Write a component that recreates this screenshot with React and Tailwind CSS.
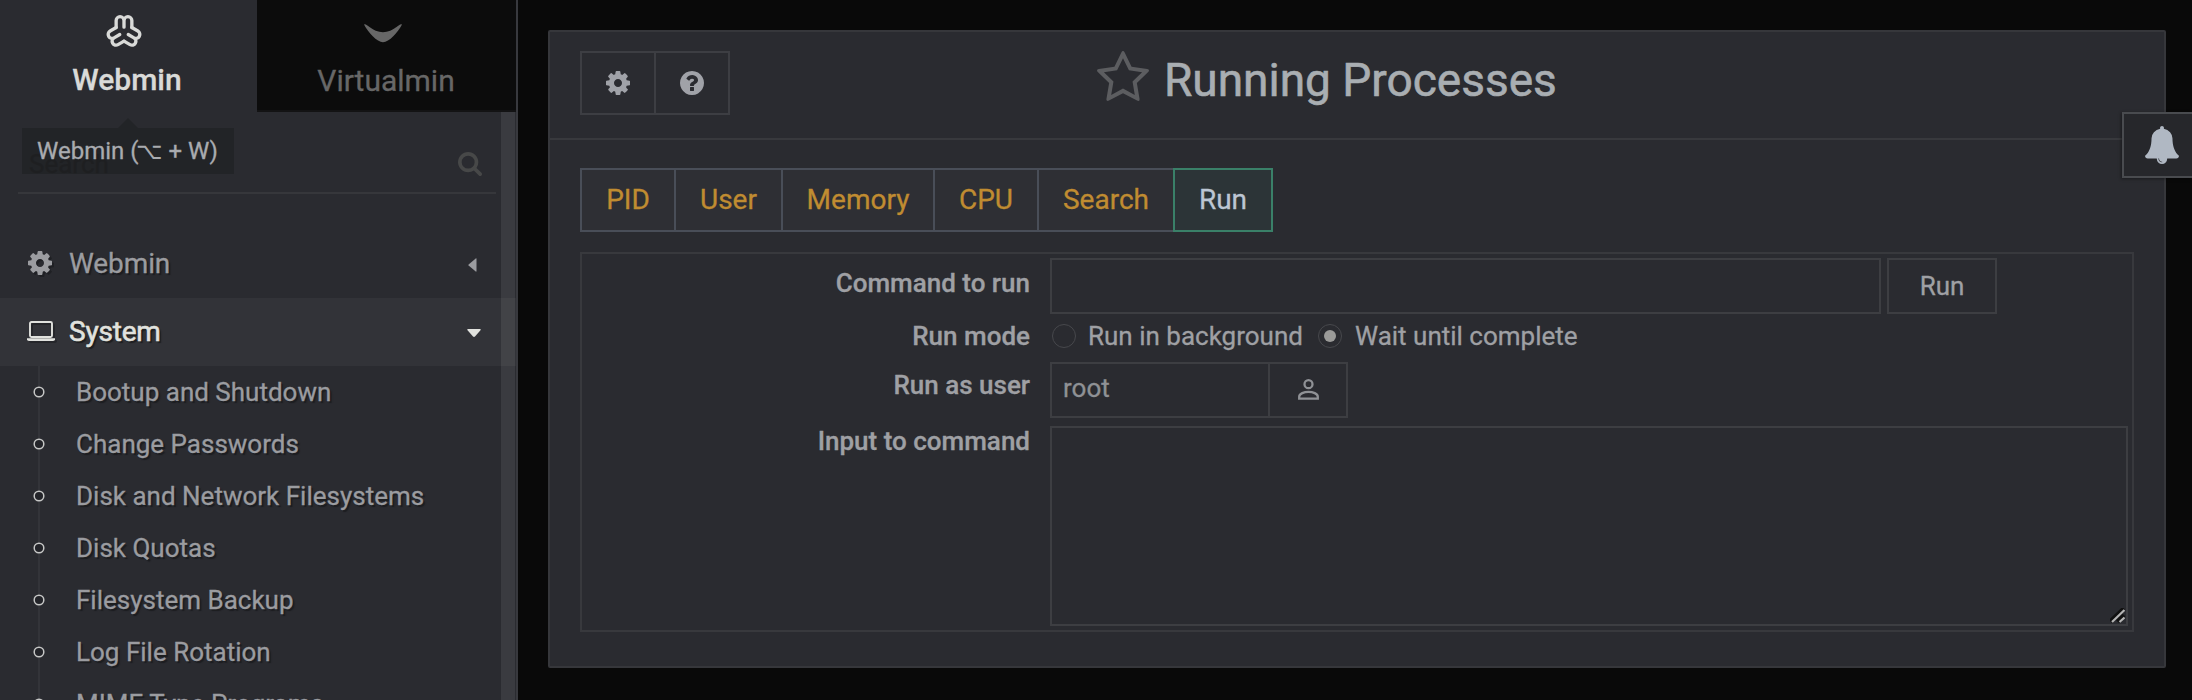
const COG =
  "M1024 896q0-106-75-181t-181-75-181 75-75 181 75 181 181 75 181-75 75-181zm512-109v222q0 12-8 23t-20 13l-185 28q-19 54-39 91 35 50 107 138 10 12 10 25t-9 23q-27 37-99 108t-94 71q-12 0-26-9l-138-108q-44 23-91 38-16 136-29 186-7 28-36 28h-222q-14 0-24.500-8.500t-11.500-21.500l-28-184q-49-16-90-37l-141 107q-10 9-25 9-14 0-25-11-126-114-165-168-7-10-7-23 0-12 8-23 15-21 51-66.500t54-70.500q-27-50-41-99l-183-27q-13-2-21-12.500t-8-23.500v-222q0-12 8-23t19-13l186-28q14-46 39-92-40-57-107-138-10-12-10-24 0-10 9-23 26-36 98.500-107.500t94.500-71.500q13 0 26 10l138 107q44-23 91-38 16-136 29-186 7-28 36-28h222q14 0 24.500 8.500t11.500 21.500l28 184q49 16 90 37l142-107q9-9 24-9 13 0 25 10 129 119 165 170 7 8 7 22 0 12-8 23-15 21-51 66.500t-54 70.500q26 50 41 98l183 28q13 2 21 12.500t8 23.500z";
const QUESTION =
  "M1024 1376v-192q0-14-9-23t-23-9h-192q-14 0-23 9t-9 23v192q0 14 9 23t23 9h192q14 0 23-9t9-23zm256-672q0-88-55.500-163t-138.500-116-170-41q-243 0-371 213-15 24 8 42l132 100q7 6 19 6 16 0 25-12 53-68 86-92 34-24 86-24 48 0 85.500 26t37.500 59q0 38-20 61t-68 45q-63 28-115.500 86.500t-52.500 125.500v36q0 14 9 23t23 9h192q14 0 23-9t9-23q0-19 21.500-49.500t54.500-49.500q32-18 49-28.500t46-35 44.500-48 28-60.500 12.500-81zm384 192q0 209-103 385.500t-279.500 279.500-385.500 103-385.500-103-279.500-279.500-103-385.500 103-385.500 279.500-279.500 385.500-103 385.500 103 279.500 279.500 103 385.500z";
const STAR =
  "M1201 1004l306-297-422-62-189-382-189 382-422 62 306 297-73 421 378-199 377 199zm527-357q0 22-26 48l-363 354 86 500q1 7 1 20 0 50-41 50-19 0-40-12l-449-236-449 236q-22 12-40 12-21 0-31.500-14.500t-10.500-35.500q0-6 2-20l86-500-364-354q-25-27-25-48 0-37 56-46l502-73 225-455q19-41 49-41t49 41l225 455 502 73q56 9 56 46z";
const BELL =
  "M912 1696q0-16-16-16-59 0-101.500-42.500t-42.500-101.500q0-16-16-16t-16 16q0 73 51.500 124.500t124.500 51.500q16 0 16-16zm816-288q0 52-38 90t-90 38h-448q0 106-75 181t-181 75-181-75-75-181h-448q-52 0-90-38t-38-90q50-42 91-88t85-119.500 74.500-158.500 50-206 19.500-260q0-152 117-282.500t307-158.500q-8-19-8-39 0-40 28-68t68-28 68 28 28 68q0 20-8 39 190 28 307 158.500t117 282.500q0 139 19.500 260t50 206 74.500 158.500 85 119.500 91 88z";
const SEARCH =
  "M1216 832q0-185-131.500-316.500t-316.500-131.500-316.500 131.500-131.500 316.500 131.500 316.500 316.500 131.500 316.500-131.500 131.500-316.500zm512 832q0 52-38 90t-90 38q-54 0-90-38l-343-342q-179 124-399 124-143 0-273.500-55.500t-225-150-150-225-55.500-273.500 55.500-273.500 150-225 225-150 273.500-55.500 273.500 55.500 225 150 150 225 55.500 273.500q0 220-124 399l343 343q37 37 37 90z";

function Glyph({ d, box, className }) {
  return (
    <svg viewBox={box} preserveAspectRatio="none" fill="currentColor" className={className}>
      <path d={d} />
    </svg>
  );
}

function WebminLogo() {
  const lobe = "M9.300 12.800V5.700a4 4 0 0 1 8 0V12.400M17.300 5.700a4 4 0 0 1 8 0V12.800";
  return (
    <svg viewBox="0 0 34.600 32.600" className="mr-[7px] h-[32px] w-[34px] overflow-visible" fill="none" stroke="currentColor" strokeWidth="3.400" strokeLinecap="round" strokeLinejoin="round">
      <path d={lobe} />
      <path d={lobe} transform="rotate(120 17.300 17.400)" />
      <path d={lobe} transform="rotate(240 17.300 17.400)" />
    </svg>
  );
}

function VirtualminLogo() {
  return (
    <svg viewBox="0 0 38 32" className="mr-[7px] h-[32px] w-[38px]" fill="currentColor">
      <path d="M0 9.500Q1 8.500 3 10.300C10 15.500 14 17.200 19 17.200S28 15.500 35 10.300Q37 8.500 38 9.500C34 17 25 27.300 19 27.300S4 17 0 9.500Z" />
    </svg>
  );
}

const submenu = [
  "Bootup and Shutdown",
  "Change Passwords",
  "Disk and Network Filesystems",
  "Disk Quotas",
  "Filesystem Backup",
  "Log File Rotation",
  "MIME Type Programs",
];

function Sidebar() {
  return (
    <aside className="relative flex h-full w-[518px] shrink-0 flex-col overflow-hidden border-r-2 border-[#38393e] bg-[#2a2b30]">
      <div className="flex h-[112px] shrink-0">
        <div className="flex w-[257px] flex-col items-center gap-[15px] pt-[15px] pr-[3px] text-[#d9dad8]">
          <WebminLogo />
          <span className="text-[30px] leading-[36px] font-medium">Webmin</span>
        </div>
        <div className="flex w-[259px] flex-col items-center gap-[16px] border-b-2 border-[#131314] bg-[#0c0c0c] pt-[15px] pr-px text-[#676767]">
          <VirtualminLogo />
          <span className="text-[30px] leading-[36px]">Virtualmin</span>
        </div>
      </div>

      <div className="mr-[20px] ml-[18px] flex h-[82px] shrink-0 items-center justify-between border-b-2 border-[#36373b] pt-[24px] pr-[14px] pl-[11px]">
        <span className="text-[26px] leading-none text-[#1e1f22]">Search</span>
        <Glyph d={SEARCH} box="64 128 1664 1664" className="size-[24px] text-[#474848]" />
      </div>

      <nav className="mt-[36px] flex flex-col [text-shadow:2px_2px_1px_#1c1d20]">
        <div className="flex h-[68px] shrink-0 items-center pl-[28px] text-[#9b9ca0]">
          <Glyph d={COG} box="0 128 1536 1536" className="mb-[2px] size-[24px] drop-shadow-[2px_2px_0px_#1f2024]" />
          <span className="ml-[17px] w-[399px] text-[28px] tracking-[-0.1px]">Webmin</span>
          <svg viewBox="0 0 9 14" className="mt-[2px] h-[14px] w-[9px]" fill="currentColor">
            <path d="M8 .3Q8.500 0 8.500 1V13Q8.500 14 7.700 13.600L.6 7.600Q0 7 .6 6.400Z" />
          </svg>
        </div>
        <div className="flex h-[68px] shrink-0 items-center bg-[#323338] pl-[27px] text-[#e1e2de]">
          <svg viewBox="0 0 28 20" className="mt-[-2px] h-[20px] w-[28px] drop-shadow-[2px_2px_0px_#25262a]">
            <rect x="3" y="1" width="22" height="15" rx="1.500" fill="none" stroke="currentColor" strokeWidth="1.900" />
            <path d="M0 17.200H28V18.500Q28 19.900 26 19.900H2Q0 19.900 0 18.500Z" fill="currentColor" />
          </svg>
          <span className="ml-[14px] w-[398px] text-[28px] tracking-[-0.2px] [-webkit-text-stroke:0.6px_currentColor]">System</span>
          <svg viewBox="0 0 14 8" className="mt-[2px] h-[8px] w-[14px]" fill="currentColor">
            <path d="M1 0H13Q14 .2 13.700 1L8 7.500Q7 8.300 6 7.500L.3 1Q0 .2 1 0Z" />
          </svg>
        </div>
        <ul className="relative text-[#9b9ca0]">
          <li className="absolute top-0 left-[38px] h-full w-[2px] bg-[#333439]" />
          {submenu.map((label) => (
            <li key={label} className="relative flex h-[52px] items-center pl-[33px] text-[26px]">
              <svg viewBox="0 0 12 12" className="mb-px size-[12px]">
                <circle cx="6" cy="6" r="4.800" fill="#232429" stroke="#c6c7c6" strokeWidth="1.500" />
              </svg>
              <span className="ml-[31px] whitespace-nowrap">{label}</span>
            </li>
          ))}
        </ul>
      </nav>

      <div className="absolute top-[112px] right-[1px] bottom-0 w-[14px] bg-white/8" />
      <div className="absolute top-[128px] left-[22px] flex h-[46px] w-[212px] items-center bg-[#1e1f22]/60 pl-[15px] text-[24px] whitespace-nowrap text-[#a9abaf]">
        <svg viewBox="0 0 20 10" className="absolute top-[-10px] left-[96px] h-[10px] w-[20px] text-[#1e1f22]/60" fill="currentColor">
          <path d="M10 0L20 10H0Z" />
        </svg>
        <span>
          Webmin (<span className="mr-[-1px] ml-[-2px] text-[23px] leading-none [-webkit-text-stroke:0px]">⌥</span> + W)
        </span>
      </div>
    </aside>
  );
}

function Label({ children, className }) {
  return <span className={"w-[448px] shrink-0 text-right font-medium " + className}>{children}</span>;
}

function Radio({ checked }) {
  return (
    <span className="flex size-[24px] items-center justify-center rounded-full border-[1.500px] border-[#47484c]">
      {checked && <span className="size-[12px] rounded-full bg-[#9a9a98]" />}
    </span>
  );
}

const tabClass = "flex h-[64px] items-center justify-center border-2 border-[#494e58] bg-[#2e2f34] text-[#c08c31]";

export default function App() {
  return (
    <div className="relative flex h-[700px] w-[2192px] overflow-hidden bg-[#090909] font-[Roboto,sans-serif] [-webkit-text-stroke:0.3px_currentColor]">
      <Sidebar />
      <main className="flex-1 pt-[30px] pr-[26px] pl-[30px]">
        <section className="h-[638px] rounded-[2px] border-2 border-[#36373b] bg-[#2a2b30]">
          <header className="flex h-[108px] border-b-2 border-[#38393d] pl-[30px]">
            <div className="mt-[19px] flex h-[64px] w-[150px] border-2 border-[#3d3e43] text-[#a0a2a8]">
              <div className="flex w-[74px] items-center justify-center border-r-2 border-[#3d3e43]">
                <Glyph d={COG} box="0 128 1536 1536" className="size-[24px]" />
              </div>
              <div className="flex flex-1 items-center justify-center">
                <Glyph d={QUESTION} box="128 128 1536 1536" className="size-[24px]" />
              </div>
            </div>
            <Glyph d={STAR} box="64 32 1664 1587" className="mt-[19px] ml-[367px] h-[50px] w-[52px] text-[#5c5d60]" />
            <h1 className="mt-[18px] ml-[15px] text-[46px] leading-[60px] text-[#a9aeb2] [-webkit-text-stroke:0.6px_currentColor]">Running Processes</h1>
          </header>

          <div className="px-[30px] pt-[28px]">
            <div className="flex text-[28px]">
              <div className={tabClass + " w-[96px]"}>PID</div>
              <div className={tabClass + " -ml-[2px] w-[109px]"}>User</div>
              <div className={tabClass + " -ml-[2px] w-[154px]"}>Memory</div>
              <div className={tabClass + " -ml-[2px] w-[106px]"}>CPU</div>
              <div className={tabClass + " -ml-[2px] w-[138px]"}>Search</div>
              <div className="-ml-[2px] flex h-[64px] w-[100px] items-center justify-center border-2 border-[#3a8068] bg-[#2c3437] text-[#bcc6d3]">Run</div>
            </div>

            <div className="mt-[20px] h-[380px] w-[1554px] border-2 border-[#38393d] pt-[4px] text-[26px] text-[#9fa0a4]">
              <div className="flex h-[56px] items-center">
                <Label className="mt-[-6px]">Command to run</Label>
                <div className="ml-[20px] h-[56px] w-[831px] border-2 border-[#3d3e42]" />
                <div className="ml-[6px] flex h-[56px] w-[110px] items-center justify-center border-2 border-[#3d3e42]">Run</div>
              </div>
              <div className="flex h-[44px] items-center">
                <Label className="">Run mode</Label>
                <div className="ml-[22px] flex items-center">
                  <Radio />
                  <span className="ml-[12px] w-[230px]">Run in background</span>
                  <Radio checked />
                  <span className="ml-[13px]">Wait until complete</span>
                </div>
              </div>
              <div className="mt-[4px] flex h-[56px] items-center">
                <Label className="mt-[-10px]">Run as user</Label>
                <div className="ml-[20px] flex h-[56px] w-[298px] border-2 border-[#3d3e42] text-[#8f9195]">
                  <div className="flex w-[218px] items-center border-r-2 border-[#3d3e42] pb-[4px] pl-[11px]">root</div>
                  <div className="flex flex-1 items-center justify-center">
                    <svg viewBox="0 0 21 21" className="mb-px size-[21px]" fill="none" stroke="currentColor" strokeWidth="2.300">
                      <circle cx="10.500" cy="5.200" r="4" />
                      <path d="M1.200 19.700V17.800C1.200 14.600 6.200 12.900 10.500 12.900S19.800 14.600 19.800 17.800V19.700Z" />
                    </svg>
                  </div>
                </div>
              </div>
              <div className="mt-[8px] flex items-start">
                <Label className="leading-[30px]">Input to command</Label>
                <div className="ml-[20px] flex h-[200px] w-[1078px] items-end justify-end border-2 border-[#3d3e42]">
                  <svg viewBox="0 0 15 15" className="mr-[1px] mb-px size-[15px]" fill="none">
                    <path d="M.5 13.500L14 .5M7.500 13.500L14 7" stroke="#111" strokeWidth="4.500" />
                    <path d="M2 14L14.500 2M9.500 14L14.500 9.500" stroke="#b4b4b4" strokeWidth="2.200" />
                  </svg>
                </div>
              </div>
            </div>
          </div>
        </section>
      </main>

      <div className="absolute top-[112px] right-0 flex h-[66px] w-[70px] justify-start border-2 border-r-0 border-[#494b4f] bg-[#26272b] pt-[12px] pl-[21px] shadow-[-1px_1px_3px_rgba(0,0,0,0.4)]">
        <Glyph d={BELL} box="64 0 1664 1792" className="h-[38px] w-[34px] text-[#b0b8c3]" />
      </div>
    </div>
  );
}
